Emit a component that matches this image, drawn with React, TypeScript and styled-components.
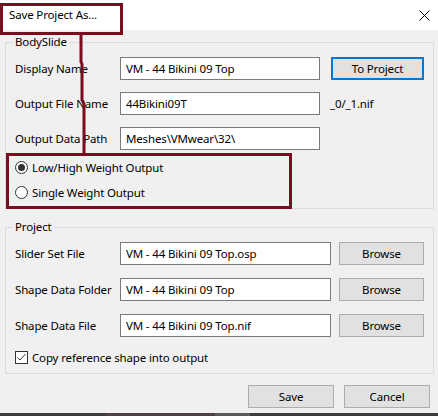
import React from "react"
import styled, { createGlobalStyle } from "styled-components"

const GlobalStyle = createGlobalStyle`
  html, body {
    margin: 0;
    padding: 0;
    background: #f0f0f0;
  }
  body {
    font-family: "Noto Sans", "Open Sans", sans-serif;
    font-size: 11.5px;
    letter-spacing: -0.15px;
    color: #000;
  }
`

const StyledWindow = styled.div`
  position: relative;
  display: flex;
  flex-direction: column;
  width: 438px;
  height: 416px;
  overflow: hidden;
  background: #f0f0f0;
`

const StyledTitleBar = styled.div`
  display: flex;
  align-items: center;
  justify-content: space-between;
  height: 30px;
  padding: 0 8px 0 9px;
  background: #ffffff;
  flex-shrink: 0;
`

const StyledTitle = styled.span`
  line-height: 16px;
`

const StyledContent = styled.div`
  display: flex;
  flex-direction: column;
  padding: 12px 4px 0 5px;
`

const StyledGroupBox = styled.div<{ $top?: number; $padTop: number; $padBottom: number }>`
  position: relative;
  display: flex;
  flex-direction: column;
  margin-top: ${({ $top }) => $top ?? 0}px;
  padding: ${({ $padTop, $padBottom }) => `${$padTop}px 0 ${$padBottom}px 9px`};
  border: 1px solid #dcdcdc;
`

/* legend sits over the group's top border */
const StyledLegend = styled.span`
  position: absolute;
  top: -9px;
  left: 7px;
  padding: 0 2px;
  line-height: 16px;
  background: #f0f0f0;
`

const StyledFieldRow = styled.div<{ $gap?: number }>`
  display: flex;
  align-items: center;
  height: 23px;
  margin-top: ${({ $gap }) => $gap ?? 0}px;
`

const StyledLabel = styled.span`
  width: 105px;
  flex-shrink: 0;
  white-space: nowrap;
`

const StyledInput = styled.div<{ $width: number }>`
  display: flex;
  align-items: center;
  box-sizing: border-box;
  width: ${({ $width }) => $width}px;
  height: 23px;
  padding: 0 5px;
  border: 1px solid #7a7a7a;
  background: #ffffff;
  white-space: nowrap;
  overflow: hidden;
`

const StyledButton = styled.div<{ $width: number; $offset: number; $isDefault?: boolean }>`
  display: flex;
  align-items: center;
  justify-content: center;
  box-sizing: border-box;
  width: ${({ $width }) => $width}px;
  height: 23px;
  margin-left: ${({ $offset }) => $offset}px;
  background: #e1e1e1;
  border: ${({ $isDefault }) => ($isDefault ? "2px solid #0078d7" : "1px solid #adadad")};
`

const StyledSuffix = styled.span`
  margin-left: 10px;
`

const StyledOptionRow = styled.div<{ $gap: number }>`
  display: flex;
  align-items: center;
  gap: 4px;
  height: 20px;
  margin-top: ${({ $gap }) => $gap}px;
`

const StyledRadio = styled.span<{ $checked?: boolean }>`
  position: relative;
  box-sizing: border-box;
  width: 13px;
  height: 13px;
  border: 1px solid #333333;
  border-radius: 50%;
  background: #ffffff;

  &::after {
    content: "";
    display: ${({ $checked }) => ($checked ? "block" : "none")};
    position: absolute;
    top: 2px;
    left: 2px;
    width: 7px;
    height: 7px;
    border-radius: 50%;
    background: #333333;
  }
`

const StyledFooter = styled.div`
  display: flex;
  justify-content: flex-end;
  margin-top: 11px;
  padding-right: 4px;
`

const StyledBottomEdge = styled.div`
  margin-top: auto;
  height: 3px;
  background: linear-gradient(
    to right,
    #3d3d3d 0,
    #3d3d3d 106px,
    #4a4244 106px,
    #4a4244 215px,
    #5a5a5a 215px,
    #5a5a5a 250px,
    #3d3d3d 250px
  );
`

const StyledAnnotation = styled.svg`
  position: absolute;
  top: 0;
  left: 0;
  pointer-events: none;
`

const CloseIcon = () => (
  <svg width="11" height="11" viewBox="0 0 11 11">
    <path d="M0.5 0.5 L10.5 10.5 M10.5 0.5 L0.5 10.5" stroke="#000" strokeWidth="1" fill="none" />
  </svg>
)

const CheckBox = () => (
  <svg width="13" height="13" viewBox="0 0 13 13">
    <rect x="0.5" y="0.5" width="12" height="12" fill="#fff" stroke="#333" />
    <path d="M2.5 6.5 L5 9 L10.5 3" stroke="#333" strokeWidth="1" fill="none" />
  </svg>
)

const App: React.FC = () => {
  const annotationColor = "#7b0c1f"

  return (
    <StyledWindow>
      <GlobalStyle />
      <StyledTitleBar>
        <StyledTitle>Save Project As...</StyledTitle>
        <CloseIcon />
      </StyledTitleBar>

      <StyledContent>
        <StyledGroupBox $padTop={14} $padBottom={6}>
          <StyledLegend>BodySlide</StyledLegend>
          <StyledFieldRow>
            <StyledLabel>Display Name</StyledLabel>
            <StyledInput $width={200}>VM - 44 Bikini 09 Top</StyledInput>
            <StyledButton $width={93} $offset={11} $isDefault>
              To Project
            </StyledButton>
          </StyledFieldRow>
          <StyledFieldRow $gap={12}>
            <StyledLabel>Output File Name</StyledLabel>
            <StyledInput $width={200}>44Bikini09T</StyledInput>
            <StyledSuffix>_0/_1.nif</StyledSuffix>
          </StyledFieldRow>
          <StyledFieldRow $gap={12}>
            <StyledLabel>Output Data Path</StyledLabel>
            <StyledInput $width={200}>Meshes\VMwear\32\</StyledInput>
          </StyledFieldRow>
          <StyledOptionRow $gap={7}>
            <StyledRadio $checked />
            <span>Low/High Weight Output</span>
          </StyledOptionRow>
          <StyledOptionRow $gap={5}>
            <StyledRadio />
            <span>Single Weight Output</span>
          </StyledOptionRow>
        </StyledGroupBox>

        <StyledGroupBox $top={18} $padTop={14} $padBottom={6}>
          <StyledLegend>Project</StyledLegend>
          <StyledFieldRow>
            <StyledLabel>Slider Set File</StyledLabel>
            <StyledInput $width={211}>VM - 44 Bikini 09 Top.osp</StyledInput>
            <StyledButton $width={85} $offset={8}>
              Browse
            </StyledButton>
          </StyledFieldRow>
          <StyledFieldRow $gap={13}>
            <StyledLabel>Shape Data Folder</StyledLabel>
            <StyledInput $width={211}>VM - 44 Bikini 09 Top</StyledInput>
            <StyledButton $width={85} $offset={8}>
              Browse
            </StyledButton>
          </StyledFieldRow>
          <StyledFieldRow $gap={13}>
            <StyledLabel>Shape Data File</StyledLabel>
            <StyledInput $width={211}>VM - 44 Bikini 09 Top.nif</StyledInput>
            <StyledButton $width={85} $offset={8}>
              Browse
            </StyledButton>
          </StyledFieldRow>
          <StyledOptionRow $gap={10}>
            <CheckBox />
            <span>Copy reference shape into output</span>
          </StyledOptionRow>
        </StyledGroupBox>

        <StyledFooter>
          <StyledButton $width={86} $offset={0}>
            Save
          </StyledButton>
          <StyledButton $width={86} $offset={10}>
            Cancel
          </StyledButton>
        </StyledFooter>
      </StyledContent>

      <StyledBottomEdge />

      <StyledAnnotation width="438" height="416" viewBox="0 0 438 416">
        <rect x="1.5" y="4.5" width="120" height="29" fill="none" stroke={annotationColor} strokeWidth="3" />
        <polyline
          points="81,35 81,62 82,64 82,100 84,104 84,153"
          fill="none"
          stroke={annotationColor}
          strokeWidth="3"
        />
        <rect x="7.5" y="154.5" width="283" height="53" fill="none" stroke={annotationColor} strokeWidth="3" />
      </StyledAnnotation>
    </StyledWindow>
  )
}

export default App
